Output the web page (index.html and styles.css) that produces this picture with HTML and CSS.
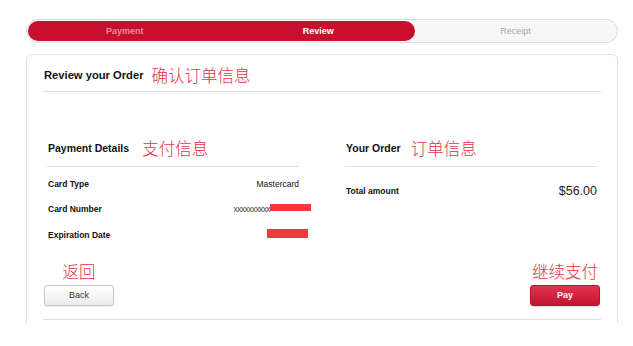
FILE: index.html
```html
<!DOCTYPE html>
<html lang="zh-CN">
<head>
    <meta charset="UTF-8">
    <title>Review your Order</title>
    <link rel="stylesheet" href="styles.css">
</head>
<body>
    <div id="page">
        <div class="progress">
            <div class="progress-done">
                <span class="step step-past">Payment</span>
                <span class="step step-current">Review</span>
            </div>
            <span class="step step-next">Receipt</span>
        </div>

        <div class="card">
            <div class="card-head">
                <h1>Review your Order</h1>
                <span class="cn cn-title">确认订单信息</span>
            </div>

            <div class="cols">
                <div class="col">
                    <div class="col-head">
                        <h2>Payment Details</h2>
                        <span class="cn cn-pay">支付信息</span>
                    </div>
                    <ul class="rows">
                        <li><span class="label">Card Type</span><span class="value">Mastercard</span></li>
                        <li><span class="label">Card Number</span><span class="value value-num"><span class="mask">xxxxxxxxxx</span><i class="redact redact-num"></i></span></li>
                        <li><span class="label">Expiration Date</span><span class="value value-exp"><i class="redact redact-exp"></i></span></li>
                    </ul>
                </div>
                <div class="col">
                    <div class="col-head">
                        <h2>Your Order</h2>
                        <span class="cn cn-order">订单信息</span>
                    </div>
                    <ul class="rows rows-total">
                        <li><span class="label">Total amount</span><span class="total">$56.00</span></li>
                    </ul>
                </div>
            </div>

            <div class="actions">
                <div class="action">
                    <span class="cn">返回</span>
                    <button class="btn btn-back">Back</button>
                </div>
                <div class="action">
                    <span class="cn">继续支付</span>
                    <button class="btn btn-pay">Pay</button>
                </div>
            </div>
        </div>
    </div>
</body>
</html>
```

FILE: styles.css
```css
*{
    margin: 0;
    padding: 0;
    box-sizing: border-box;
}
ul{
    list-style: none;
}
body{
    background: #fff;
    font-family: "Liberation Sans", Arial, "Noto Sans CJK SC", sans-serif;
    color: #111;
}
#page{
    width: 618px;
    padding: 19px 0 0 26px;
}

/* steps bar */
.progress{
    display: flex;
    height: 24px;
    padding: 1px;
    border: 1px solid #dcdcdc;
    border-radius: 12px;
    background: #f7f7f7;
}
.progress-done{
    display: flex;
    width: 387px;
    background: #c8102e;
    border-radius: 10px;
}
.step{
    flex: 1;
    text-align: center;
    font-size: 9px;
    line-height: 20px;
}
.step-past{
    color: #ee8a9a;
    font-weight: bold;
}
.step-current{
    color: #fff;
    font-weight: bold;
}
.step-next{
    color: #a8a8a8;
}

/* card */
.card{
    margin-top: 11px;
    padding: 0 16px 3px;
    border: 1px solid #e2e2e2;
    border-bottom: none;
    border-radius: 6px 6px 0 0;
}
.card-head{
    display: flex;
    align-items: center;
    height: 37px;
    padding: 4px 0 0 1px;
    border-bottom: 1px solid #dedede;
}
h1{
    font-size: 11.2px;
    font-weight: bold;
}
h2{
    font-size: 10.5px;
    font-weight: bold;
}
.cn{
    font-family: "Noto Sans CJK SC", sans-serif;
    font-size: 16.5px;
    font-weight: 300;
    line-height: 20px;
    color: #e4323f;
}
.cn-title{
    margin-left: 8px;
}
.cn-pay{
    margin-left: 13px;
}
.cn-order{
    margin-left: 10px;
}

.cols{
    display: grid;
    grid-template-columns: 1fr 1fr;
    column-gap: 46px;
    padding: 0 4px;
    margin-top: 44px;
}
.col-head{
    display: flex;
    align-items: center;
    height: 31px;
    padding: 0 0 6px 1px;
    border-bottom: 1px solid #dedede;
}
.rows{
    margin-top: 4px;
}
.rows li{
    display: flex;
    justify-content: space-between;
    align-items: center;
    height: 25.5px;
    padding-left: 1px;
    font-size: 8.5px;
}
.label{
    font-weight: bold;
}
.value{
    display: flex;
    align-items: center;
}
.value-num{
    margin-right: -12px;
}
.value-exp{
    margin-right: -9px;
}
.mask{
    font-size: 8.5px;
    color: #444;
    letter-spacing: -0.6px;
}
.redact{
    display: block;
    background: #f23a3c;
}
.redact-num{
    width: 41px;
    height: 7px;
    margin-top: -3px;
}
.redact-exp{
    width: 41px;
    height: 9px;
    margin-top: -3px;
}
.rows-total{
    margin-top: 11px;
}
.total{
    font-size: 12.5px;
    color: #222;
}

/* buttons */
.actions{
    display: flex;
    justify-content: space-between;
    margin-top: 13px;
    padding: 0 1px 13px;
    border-bottom: 1px solid #dedede;
}
.action{
    display: flex;
    flex-direction: column;
    align-items: center;
}
.btn{
    width: 70px;
    height: 21px;
    margin-top: 4px;
    border-radius: 3px;
    font-family: "Liberation Sans", Arial, sans-serif;
    font-size: 9px;
    cursor: pointer;
}
.btn-back{
    border: 1px solid #c9c9c9;
    background: linear-gradient(#ffffff, #ebebeb);
    color: #333;
    box-shadow: 0 1px 1px rgba(0,0,0,0.08);
}
.btn-pay{
    border: 1px solid #bb1330;
    background: linear-gradient(#e2334f, #c4142f);
    color: #fff;
    font-weight: bold;
    box-shadow: 0 1px 1px rgba(0,0,0,0.15);
}
```
